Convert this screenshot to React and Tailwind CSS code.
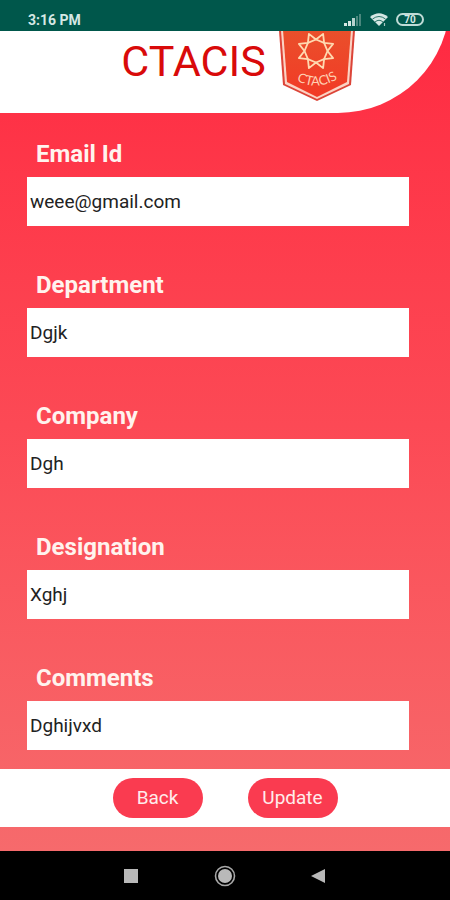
const fields = [
  { id: "email", label: "Email Id", type: "email", value: "weee@gmail.com" },
  { id: "department", label: "Department", type: "text", value: "Dgjk" },
  { id: "company", label: "Company", type: "text", value: "Dgh" },
  { id: "designation", label: "Designation", type: "text", value: "Xghj" },
  { id: "comments", label: "Comments", type: "text", value: "Dghijvxd" },
];

function SignalIcon() {
  return (
    <svg viewBox="0 0 18 12" className="h-3 w-[18px]" aria-hidden="true">
      <rect x="0" y="9" width="3" height="3" fill="#d5e8e4" />
      <rect x="4" y="7" width="3" height="5" fill="#d5e8e4" />
      <rect x="8" y="4" width="3" height="8" fill="#b5d2cd" />
      <rect x="12" y="2" width="2" height="10" fill="#4a877d" />
      <rect x="15" y="0" width="2" height="12" fill="#4a877d" />
    </svg>
  );
}

function WifiIcon() {
  return (
    <svg viewBox="0 0 18 13" className="h-[13px] w-[18px]" aria-hidden="true">
      <path d="M0 4 Q9 -3.5 18 4 L9 13 Z" fill="#d5e8e4" />
      <path d="M2.5 6 Q9 1 15.5 6 M5 9 Q9 5.5 13 9" fill="none" stroke="#2c7469" strokeWidth="1" />
      <path d="M14.5 10v3" stroke="#a5c8c2" strokeWidth="1.2" />
    </svg>
  );
}

function Logo() {
  return (
    <svg viewBox="0 0 78 84" className="h-[84px] w-[78px] shrink-0" role="img" aria-label="CTACIS logo">
      <defs>
        <linearGradient id="shield" x1="0" y1="0" x2="0" y2="1">
          <stop offset="0" stopColor="#e8542c" />
          <stop offset="1" stopColor="#f23a26" />
        </linearGradient>
        <path id="arc" d="M10 58 Q39 80 68 56" />
      </defs>
      <path d="M0 0H78L73 68L39 84L5 68Z" fill="#dc4438" />
      <path d="M2 0H76L71 67L39 82L7 67Z" fill="#fbd3c4" />
      <path d="M4 0H74L69 65L39 80L9 65Z" fill="url(#shield)" />
      <g transform="translate(38 34)" fill="none" stroke="#ffd9b0" strokeWidth="1.8" strokeLinejoin="round">
        <path d="M11.5 0L17.1 7.1L8.1 8.1L7.1 17.1L0 11.5L-7.1 17.1L-8.1 8.1L-17.1 7.1L-11.5 0L-17.1 -7.1L-8.1 -8.1L-7.1 -17.1L0 -11.5L7.1 -17.1L8.1 -8.1L17.1 -7.1Z" />
        <path d="M11.5 0L8.1 8.1L0 11.5L-8.1 8.1L-11.5 0L-8.1 -8.1L0 -11.5L8.1 -8.1Z" />
      </g>
      <text fill="#ffd0b4" fontSize="13" fontFamily="Lato, sans-serif">
        <textPath href="#arc" startOffset="50%" textAnchor="middle">CTACIS</textPath>
      </text>
    </svg>
  );
}

function Field({ id, label, type, value }) {
  return (
    <div className="flex flex-col gap-1.5">
      <label htmlFor={id} className="pl-[9px] text-2xl leading-[34px] font-bold text-[#fff3ee]">
        {label}
      </label>
      <input
        id={id}
        type={type}
        defaultValue={value}
        className="h-[49px] w-full bg-white px-[3px] text-[19px] text-[#222] outline-none"
      />
    </div>
  );
}

export default function App() {
  return (
    <div className="flex min-h-screen flex-col bg-black font-[Roboto,sans-serif]">
      <div className="relative z-10 flex h-[31px] items-center justify-between bg-[#00574b] pt-2 pr-[26px] pl-7 text-[#d5e8e4]">
        <span className="text-sm font-bold">3:16 PM</span>
        <div className="flex items-center gap-2">
          <SignalIcon />
          <WifiIcon />
          <span className="flex h-[13px] w-7 items-center justify-center rounded-full border-2 border-[#bfdbd6] text-[10px] leading-none font-bold">
            70
          </span>
        </div>
      </div>

      <div className="-mt-[31px] flex flex-1 flex-col bg-linear-to-b from-[#ff2640] via-[#fc4955] to-[#f66a6c]">
        <header className="flex h-[113px] items-end justify-center gap-3 rounded-br-[112px] bg-white pb-3 pl-[27px]">
          <h1 className="text-[43px] leading-[80px] text-[#d90a0a]">CTACIS</h1>
          <Logo />
        </header>

        <form className="flex flex-1 flex-col">
          <div className="flex flex-col gap-[42px] pt-6 pr-[41px] pb-[18px] pl-[27px]">
            {fields.map((field) => (
              <Field key={field.id} {...field} />
            ))}
          </div>
          <div className="mt-auto mb-6 flex h-[58px] items-center justify-center gap-[45px] bg-white">
            <button type="button" className="h-10 w-[90px] rounded-full bg-[#fa3b50] text-[19px] text-[#ffeceb]">
              Back
            </button>
            <button type="submit" className="h-10 w-[90px] rounded-full bg-[#fa3b50] text-[19px] text-[#ffeceb]">
              Update
            </button>
          </div>
        </form>
      </div>

      <nav className="flex h-[49px] items-center justify-center gap-[70px] bg-black">
        <button type="button" aria-label="Recent apps">
          <svg viewBox="0 0 24 24" className="size-6">
            <rect x="5" y="5" width="14" height="14" fill="#b9b9b9" />
          </svg>
        </button>
        <button type="button" aria-label="Home">
          <svg viewBox="0 0 24 24" className="size-6">
            <circle cx="12" cy="12" r="9.5" fill="none" stroke="#a8a8a8" strokeWidth="1.6" />
            <circle cx="12" cy="12" r="7" fill="#b9b9b9" />
          </svg>
        </button>
        <button type="button" aria-label="Go back">
          <svg viewBox="0 0 24 24" className="size-6">
            <path d="M4 12L18 5V19Z" fill="#b9b9b9" />
          </svg>
        </button>
      </nav>
    </div>
  );
}
